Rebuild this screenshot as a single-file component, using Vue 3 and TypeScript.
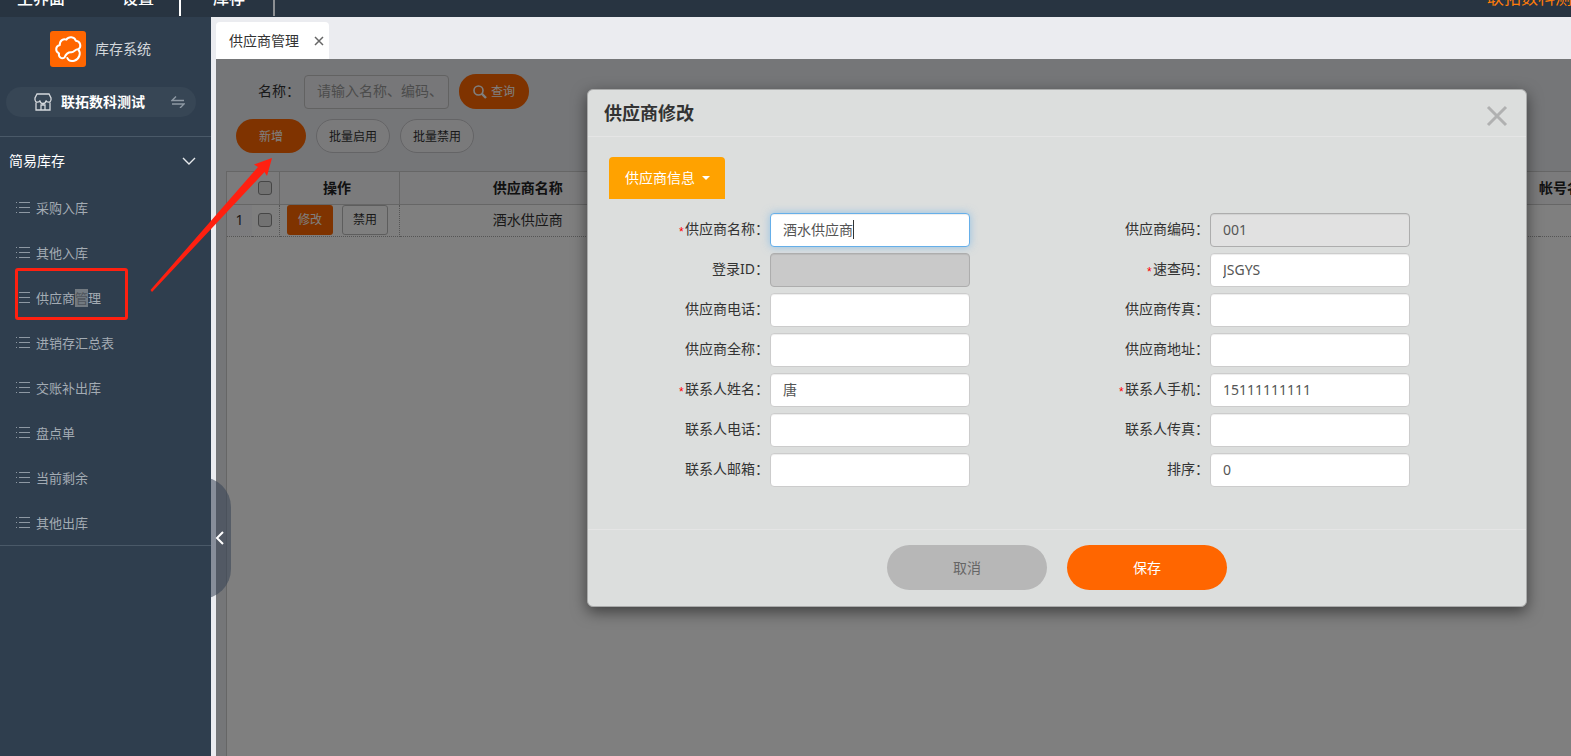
<script setup lang="ts">
import { reactive, ref } from 'vue'

interface Field {
  id: string
  label: string
  value: string
  required?: boolean
  active?: boolean
  locked?: 'light' | 'dark'
}

const navItems = [
  { text: '主界面', cls: 'first' },
  { text: '设置', cls: 'marked' },
  { text: '库存', cls: 'last' },
]

const menu = ['采购入库', '其他入库', '供应商管理', '进销存汇总表', '交账补出库', '盘点单', '当前剩余', '其他出库']

const keyword = ref('')

const fields = reactive<Field[]>([
  { id: 'name', label: '供应商名称：', value: '酒水供应商', required: true, active: true },
  { id: 'code', label: '供应商编码：', value: '001', locked: 'light' },
  { id: 'login', label: '登录ID：', value: '', locked: 'dark' },
  { id: 'quick', label: '速查码：', value: 'JSGYS', required: true },
  { id: 'tel', label: '供应商电话：', value: '' },
  { id: 'fax', label: '供应商传真：', value: '' },
  { id: 'full', label: '供应商全称：', value: '' },
  { id: 'addr', label: '供应商地址：', value: '' },
  { id: 'contact', label: '联系人姓名：', value: '唐', required: true },
  { id: 'mobile', label: '联系人手机：', value: '15111111111', required: true },
  { id: 'ctel', label: '联系人电话：', value: '' },
  { id: 'cfax', label: '联系人传真：', value: '' },
  { id: 'mail', label: '联系人邮箱：', value: '' },
  { id: 'sort', label: '排序：', value: '0' },
])
</script>

<template>
  <div class="page">
    <header class="topbar">
      <nav class="topnav">
        <a v-for="n in navItems" :key="n.text" href="#" :class="n.cls">{{ n.text }}</a>
      </nav>
      <span class="account">联拓数科测试</span>
    </header>

    <div class="body">
      <aside class="sidebar">
        <div class="brand">
          <svg class="logo" viewBox="0 0 36 36" width="36" height="36" aria-hidden="true">
            <rect width="36" height="36" rx="3" fill="#ff6600" />
            <g fill="none" stroke="#fff" stroke-width="2" stroke-linecap="round" stroke-linejoin="round">
              <path d="M14.500 26.500C11.500 28.500 8.200 26 9 22.300C5 20.500 5.300 15 9.800 14C9.500 9.500 13.500 7.200 16.500 8.600C18.500 5.200 24.500 5.300 25.800 9.800C30.500 10.200 31.800 15.500 28.300 18.300C25 18 24.500 21 21.500 21.200C18.500 21 16 22.500 14.500 26.500" />
              <path d="M28.300 18.300C31.300 22 29.300 28.500 24.300 29.700C21 30.500 18.200 29.300 17.300 27" />
            </g>
          </svg>
          <span>库存系统</span>
        </div>

        <button class="store" type="button">
          <svg width="18" height="18" viewBox="0 0 18 18" fill="none" stroke="#d5d9dd" stroke-width="1.300" aria-hidden="true">
            <path d="M3 1H15L17 5V7A2.600 2.600 0 0 1 12 7.500A3 3 0 0 1 6 7.500A2.600 2.600 0 0 1 1 7V5ZM2 9.500V17H16V9.500M7 17V12H11V17" />
          </svg>
          <b>联拓数科测试</b>
          <svg class="swap" width="14" height="12" viewBox="0 0 14 12" fill="none" stroke="#8e99a4" stroke-width="1.400" aria-hidden="true">
            <path d="M5 0.500L1 4.500H13M1 8H13L9 12" />
          </svg>
        </button>

        <div class="group">
          <span>简易库存</span>
          <svg width="14" height="8" viewBox="0 0 14 8" fill="none" stroke="#e6e9ec" stroke-width="1.400" aria-hidden="true">
            <path d="M1 1L7 7L13 1" />
          </svg>
        </div>

        <ul class="menu">
          <li v-for="m in menu" :key="m">
            <a href="#">
              <svg width="14" height="12" viewBox="0 0 14 12" stroke="#8e98a3" stroke-width="1" aria-hidden="true">
                <path d="M0 0.500H1M3 0.500H14M0 5.500H1M3 5.500H14M0 10.500H1M3 10.500H14" />
              </svg>
              <span v-if="m === '供应商管理'">供应商<mark>管</mark>理</span>
              <span v-else>{{ m }}</span>
            </a>
          </li>
        </ul>
        <div class="focus-box"></div>
      </aside>

      <button class="handle" type="button" aria-label="收起">
        <svg width="9" height="14" viewBox="0 0 9 14" fill="none" stroke="#fff" stroke-width="2" aria-hidden="true">
          <path d="M8 1L2 7L8 13" />
        </svg>
      </button>

      <main class="main">
        <div class="tabs">
          <div class="tab">
            <span>供应商管理</span>
            <button type="button" aria-label="关闭标签">
              <svg width="10" height="10" viewBox="0 0 10 10" stroke="#666" stroke-width="1.500" aria-hidden="true">
                <path d="M1 1L9 9M9 1L1 9" />
              </svg>
            </button>
          </div>
        </div>

        <section class="content">
          <form class="search" @submit.prevent>
            <label for="kw">名称：</label>
            <input id="kw" v-model="keyword" type="text" placeholder="请输入名称、编码、助记码" />
            <button class="pill orange query" type="submit">
              <svg width="14" height="14" viewBox="0 0 14 14" fill="none" stroke="#fff" aria-hidden="true">
                <circle cx="5.500" cy="5.500" r="4.500" stroke-width="1.600" />
                <path d="M8.700 8.700L13 13" stroke-width="2.400" />
              </svg>
              查询
            </button>
          </form>
          <div class="actions">
            <button class="pill orange" type="button">新增</button>
            <button class="pill plain" type="button">批量启用</button>
            <button class="pill plain" type="button">批量禁用</button>
          </div>

          <div class="grid">
            <table>
              <colgroup>
                <col class="c-no" />
                <col class="c-check" />
                <col class="c-op" />
                <col class="c-name" />
                <col />
                <col class="c-account" />
              </colgroup>
              <thead>
                <tr>
                  <th></th>
                  <th class="sep"><input type="checkbox" aria-label="全选" /></th>
                  <th class="sep op">操作</th>
                  <th>供应商名称</th>
                  <th></th>
                  <th class="cut">帐号名称</th>
                </tr>
              </thead>
              <tbody>
                <tr>
                  <td>1</td>
                  <td class="sep"><input type="checkbox" aria-label="选择第1行" /></td>
                  <td class="sep">
                    <div class="ops">
                      <button class="edit" type="button">修改</button>
                      <button class="ban" type="button">禁用</button>
                    </div>
                  </td>
                  <td>酒水供应商</td>
                  <td></td>
                  <td></td>
                </tr>
              </tbody>
            </table>
          </div>

          <div class="mask"></div>

          <div class="modal" role="dialog" aria-labelledby="dlg-title">
            <div class="modal-head">
              <h2 id="dlg-title">供应商修改</h2>
              <button type="button" aria-label="关闭">
                <svg width="22" height="22" viewBox="0 0 22 22" stroke="#b0b1b1" stroke-width="3" aria-hidden="true">
                  <path d="M2 2L20 20M20 2L2 20" />
                </svg>
              </button>
            </div>
            <div class="modal-body">
              <button class="info-tab" type="button">供应商信息<i class="caret"></i></button>
              <form class="fields" @submit.prevent>
                <div v-for="f in fields" :key="f.id" class="field">
                  <label :for="f.id"><em v-if="f.required">*</em>{{ f.label }}</label>
                  <div class="box">
                    <input
                      :id="f.id"
                      v-model="f.value"
                      type="text"
                      :readonly="!!f.locked"
                      :class="[f.locked, { active: f.active }]"
                    />
                    <i v-if="f.active" class="cursor"></i>
                  </div>
                </div>
              </form>
            </div>
            <div class="modal-foot">
              <button class="cancel" type="button">取消</button>
              <button class="save" type="button">保存</button>
            </div>
          </div>
        </section>
      </main>

      <svg class="arrow" width="124" height="136" viewBox="0 0 124 136" aria-hidden="true">
        <path d="M0.500 133L108 10L104 7.500L122 1L117 19L114.500 15L2 135Z" fill="#ff2010" />
      </svg>
    </div>
  </div>
</template>

<style>
html,
body {
  margin: 0;
  overflow: hidden;
}
</style>

<style scoped>
* {
  box-sizing: border-box;
}
.page {
  height: 100vh;
  display: flex;
  flex-direction: column;
  overflow: hidden;
  font-family: "Noto Sans", "Noto Sans CJK SC", sans-serif;
  font-size: 14px;
  line-height: 20px;
  color: #333;
}
button,
input {
  font: inherit;
  color: inherit;
}
button {
  border: 0;
  padding: 0;
  background: none;
}
a {
  color: inherit;
  text-decoration: none;
}
.topbar {
  flex: none;
  height: 17px;
  overflow: hidden;
  display: flex;
  align-items: flex-end;
  justify-content: space-between;
  background: #283441;
  padding-bottom: 1px;
}
.topnav {
  display: flex;
}
.topnav a {
  height: 36px;
  line-height: 36px;
  font-size: 16px;
  font-weight: 500;
  color: #fff;
}
.topnav .first {
  padding: 0 29px 0 17px;
}
.topnav .marked {
  padding: 0 25px 0 28px;
  border-right: 2px solid #fff;
}
.topnav .last {
  padding: 0 28px 0 32px;
  border-right: 2px solid #8c8f93;
}
.account {
  width: 84px;
  height: 36px;
  line-height: 36px;
  font-size: 17px;
  white-space: nowrap;
  color: #ff7d0a;
}
.body {
  flex: 1;
  min-height: 0;
  display: flex;
  position: relative;
}
.sidebar {
  position: relative;
  z-index: 3;
  flex: none;
  width: 211px;
  background: #2f3e4e;
  padding-top: 14px;
}
.brand {
  display: flex;
  align-items: center;
  gap: 9px;
  padding-left: 50px;
  color: #d2d6da;
}
.logo {
  display: block;
}
.store {
  display: flex;
  align-items: center;
  gap: 9px;
  width: 190px;
  height: 30px;
  margin: 20px 0 19px 6px;
  padding: 0 11px 0 28px;
  border-radius: 15px;
  background: #374655;
  color: #fff;
}
.swap {
  margin-left: auto;
}
.group {
  display: flex;
  align-items: center;
  justify-content: space-between;
  height: 49px;
  padding: 0 15px 0 9px;
  border-top: 1px solid #4a5968;
  color: #fff;
}
.menu {
  list-style: none;
  margin: 0;
  padding: 0;
  border-bottom: 1px solid #4a5968;
}
.menu a {
  display: flex;
  align-items: center;
  gap: 6px;
  height: 45px;
  padding-left: 16px;
  font-size: 13px;
  color: #a3abb3;
}
.menu mark {
  background: #727a81;
  color: #4f555c;
}
.focus-box {
  position: absolute;
  left: 15px;
  top: 251px;
  width: 113px;
  height: 52px;
  border: 3px solid #ff2010;
  border-radius: 3px;
}
.handle {
  position: absolute;
  z-index: 2;
  left: 171px;
  top: 460px;
  width: 60px;
  height: 122px;
  padding-left: 44px;
  border-radius: 30px;
  background: rgba(52, 66, 84, 0.55);
}
.handle svg {
  display: block;
}
.main {
  flex: 1;
  min-width: 0;
  display: flex;
  flex-direction: column;
  background: #ebecf0;
  padding-left: 5px;
}
.tabs {
  flex: none;
  padding-top: 5px;
}
.tab {
  display: flex;
  align-items: center;
  justify-content: space-between;
  width: 113px;
  height: 37px;
  padding: 0 5px 0 13px;
  border-radius: 4px 4px 0 0;
  background: #fff;
}
.tab button svg {
  display: block;
}
.content {
  position: relative;
  flex: 1;
  min-height: 0;
  display: flex;
  flex-direction: column;
  padding: 15px 0 0 10px;
}
.search {
  display: flex;
  align-items: center;
  gap: 10px;
  height: 35px;
  padding-left: 32px;
}
.search label {
  width: 36px;
  white-space: nowrap;
  padding-bottom: 2px;
}
.search input {
  width: 145px;
  height: 34px;
  padding: 0 12px 2px;
  border: 1px solid #c4c4c4;
  border-radius: 4px;
  background: #efeff2;
}
.search input::placeholder {
  color: #999;
}
.pill {
  height: 34px;
  padding-top: 1px;
  border-radius: 17px;
  font-size: 12px;
}
.orange {
  width: 70px;
  background: #ff6600;
  color: #fff;
}
.query {
  display: flex;
  align-items: center;
  justify-content: center;
  gap: 4px;
  height: 35px;
}
.actions {
  display: flex;
  gap: 10px;
  padding: 10px 0 18px 10px;
}
.plain {
  width: 74px;
  border: 1px solid #c8c8cc;
  background: #f5f5f7;
}
.grid {
  flex: 1;
  overflow: hidden;
  border-left: 1px solid #ccc;
  border-top: 1px solid #ccc;
  background: #fff;
}
table {
  width: 100%;
  table-layout: fixed;
  border-collapse: collapse;
}
.c-no {
  width: 25px;
}
.c-check {
  width: 27px;
}
.c-op {
  width: 120px;
}
.c-name {
  width: 257px;
}
.c-account {
  width: 32px;
}
th,
td {
  height: 32px;
  padding: 0;
  text-align: center;
  white-space: nowrap;
}
th {
  border-bottom: 1px solid #ccc;
  background: #f6f6f9;
  color: #222;
}
th.sep {
  border-right: 1px solid #ccc;
}
th.op {
  padding-right: 4px;
}
td {
  border-bottom: 1px dotted #aaa;
}
td:first-child {
  background: #f9f9fd;
}
td.sep {
  border-right: 1px dotted #aaa;
}
th.cut {
  text-align: left;
}
th input,
td input {
  appearance: none;
  display: block;
  width: 14px;
  height: 14px;
  margin: 0 auto;
  border: 1px solid #8c8c8c;
  border-radius: 3px;
  background: #e4e4e4;
}
.ops {
  display: flex;
  justify-content: center;
  gap: 9px;
  padding-right: 3px;
}
.ops button {
  width: 46px;
  height: 30px;
  border-radius: 3px;
  font-size: 12px;
}
.edit {
  background: #ff6600;
  color: #fff;
}
.ops .ban {
  border: 1px solid #bbb;
}
.mask {
  position: absolute;
  inset: 0;
  background: rgba(0, 0, 0, 0.5);
}
.modal {
  position: absolute;
  top: 30px;
  left: 371px;
  right: 44px;
  border: 1px solid #a9aaaa;
  border-radius: 6px;
  background: #dcdedd;
  box-shadow: 0 5px 15px rgba(0, 0, 0, 0.5);
}
.modal-head {
  display: flex;
  align-items: center;
  justify-content: space-between;
  height: 47px;
  padding: 0 18px 0 16px;
  border-bottom: 1px solid #e5e5e5;
}
.modal-head h2 {
  margin: 0;
  font-size: 18px;
  line-height: 24px;
}
.modal-head svg {
  display: block;
  margin-top: 5px;
}
.modal-body {
  padding: 20px 37px 42px 21px;
}
.info-tab {
  display: flex;
  align-items: center;
  gap: 7px;
  height: 42px;
  padding: 0 15px 0 16px;
  border-radius: 4px 4px 0 0;
  background: #ffa200;
  color: #fff;
}
.caret {
  border: 4px solid transparent;
  border-top-color: #fff;
  border-bottom: 0;
}
.fields {
  display: grid;
  grid-template-columns: 1fr 1fr;
  row-gap: 6px;
  padding-top: 14px;
}
.field {
  display: flex;
}
.field label {
  width: 161px;
  height: 34px;
  padding-right: 1px;
  line-height: 32px;
  text-align: right;
  white-space: nowrap;
}
.field em {
  font: 12px/20px "Liberation Mono", monospace;
  vertical-align: -2px;
  color: #f00;
}
.box {
  position: relative;
}
.box input {
  display: block;
  width: 200px;
  height: 34px;
  padding: 0 12px 2px;
  border: 1px solid #ccc;
  border-radius: 4px;
  background: #fff;
  color: #555;
  box-shadow: inset 0 1px 1px rgba(0, 0, 0, 0.075);
  outline: 0;
}
.box .light {
  border-color: #adadad;
  background: #e1e1e1;
}
.box .dark {
  border-color: #adadad;
  background: #c9c9c9;
}
.box .active {
  border-color: #66afe9;
  box-shadow: inset 0 1px 1px rgba(0, 0, 0, 0.075), 0 0 8px rgba(102, 175, 233, 0.6);
}
.cursor {
  position: absolute;
  left: 83px;
  top: 7px;
  width: 1px;
  height: 19px;
  background: #333;
}
.modal-foot {
  display: flex;
  justify-content: center;
  gap: 20px;
  padding: 15px 0 16px;
  border-top: 1px solid #e5e5e5;
}
.modal-foot button {
  width: 160px;
  height: 45px;
  border-radius: 23px;
}
.modal-foot .cancel {
  background: #b7b7b7;
  color: #666;
}
.modal-foot .save {
  background: #ff6600;
  color: #fff;
}
.arrow {
  position: absolute;
  z-index: 4;
  left: 150px;
  top: 140px;
}
</style>
